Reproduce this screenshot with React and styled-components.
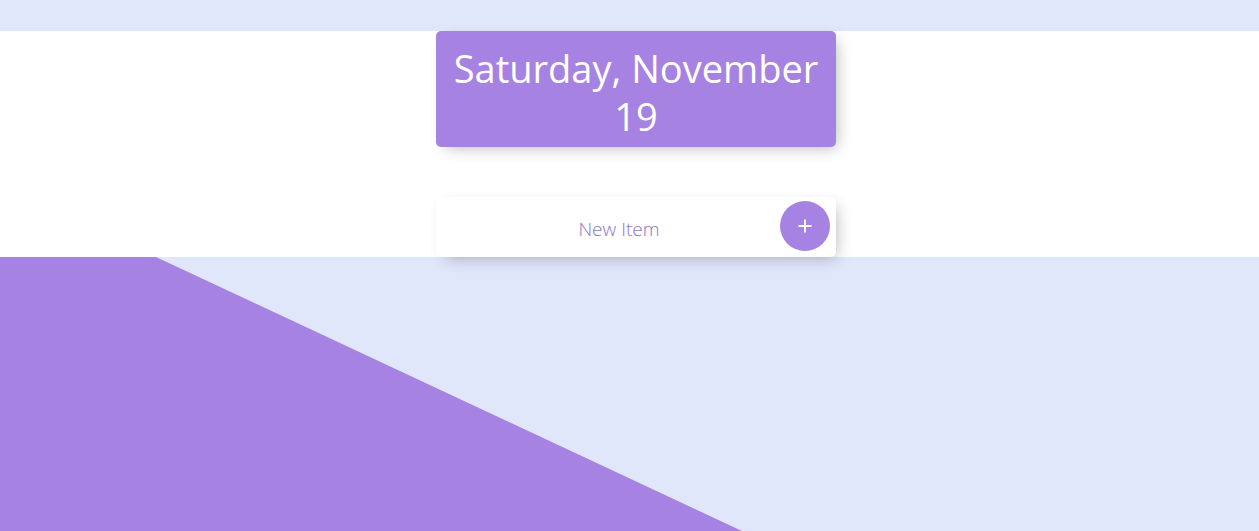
import React, { useState } from 'react';
import styled, { createGlobalStyle } from 'styled-components';

const COLOR = {
	purple: '#a683e2',
	lavender: '#e1e7fb',
	white: '#ffffff',
	placeholder: '#8f74c6',
};

const GlobalStyle = createGlobalStyle`
	* {
		box-sizing: border-box;
	}
	html, body {
		margin: 0;
		padding: 0;
		height: 100%;
	}
	body {
		background-color: ${COLOR.lavender};
		font-family: 'Open Sans', 'Noto Sans', sans-serif;
		overflow: hidden;
	}
`;

const App = () => {
	const [item, setItem] = useState('');

	return (
		<Page>
			<GlobalStyle />
			<TopSection>
				<DateCard>
					<h1>Saturday, November 19</h1>
				</DateCard>
				<ItemForm onSubmit={(e) => e.preventDefault()}>
					<input
						type="text"
						placeholder="New Item"
						value={item}
						onChange={(e) => setItem(e.target.value)}
					/>
					<AddButton type="submit" aria-label="add">
						<svg width="16" height="16" viewBox="0 0 16 16">
							<path d="M8 1.5v13M1.5 8h13" stroke="#fff" strokeWidth="2" fill="none" />
						</svg>
					</AddButton>
				</ItemForm>
			</TopSection>
			<Backdrop />
		</Page>
	);
};

export default App;

const Page = styled.div`
	display: flex;
	flex-direction: column;
	height: 100vh;
	padding-top: 31px;
`;

const TopSection = styled.section`
	display: flex;
	flex-direction: column;
	align-items: center;
	height: 226px;
	padding-left: 13px;
	background-color: ${COLOR.white};
`;

const DateCard = styled.div`
	width: 400px;
	height: 116px;
	padding: 13px 16px 0;
	background-color: ${COLOR.purple};
	border-radius: 5px;
	box-shadow: 5px 5px 15px -5px rgba(0, 0, 0, 0.3);
	text-align: center;

	h1 {
		margin: 0;
		font-size: 38px;
		font-weight: 400;
		line-height: 48px;
		color: ${COLOR.white};
	}
`;

const ItemForm = styled.form`
	display: flex;
	align-items: center;
	justify-content: space-between;
	width: 400px;
	height: 60px;
	margin-top: 50px;
	padding: 0 6px 0 22px;
	background-color: ${COLOR.white};
	border-radius: 5px;
	box-shadow: 5px 5px 15px -5px rgba(0, 0, 0, 0.3);

	input {
		flex: 1;
		height: 100%;
		padding: 4px 0 0;
		border: none;
		outline: none;
		background: transparent;
		text-align: center;
		font-family: 'Open Sans', 'Noto Sans', sans-serif;
		font-size: 19px;
		font-weight: 300;
		color: ${COLOR.placeholder};
	}

	input::placeholder {
		color: ${COLOR.placeholder};
	}
`;

const AddButton = styled.button`
	display: flex;
	align-items: center;
	justify-content: center;
	width: 50px;
	height: 50px;
	margin-top: -2px;
	padding: 0;
	border: none;
	border-radius: 50%;
	background-color: ${COLOR.purple};
	cursor: pointer;
`;

const Backdrop = styled.div`
	position: relative;
	flex: 1;

	&::before {
		content: '';
		position: absolute;
		inset: 0;
		background-color: ${COLOR.purple};
		clip-path: polygon(0 0, 156px 0, 742px 100%, 0 100%);
	}
`;
